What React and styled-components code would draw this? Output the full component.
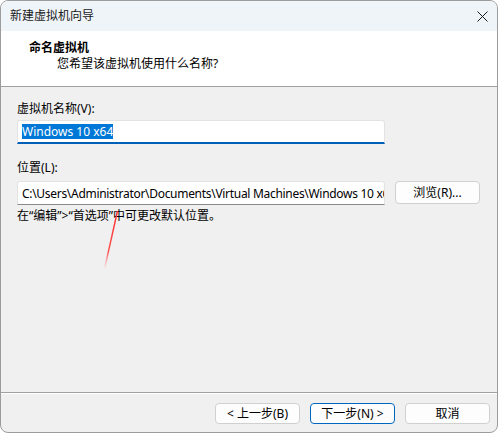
import React from "react";
import styled, { createGlobalStyle } from "styled-components";

const GlobalStyle = createGlobalStyle`
  html, body {
    margin: 0;
    padding: 0;
    background: #ffffff;
  }
  body {
    font-family: "Noto Sans", "Noto Sans CJK SC", sans-serif;
    font-size: 12px;
    color: #000;
  }
`;

const Window = styled.div`
  position: relative;
  box-sizing: border-box;
  width: 498px;
  height: 433px;
  border: 1px solid #9c9c9c;
  border-radius: 8px;
  background: #f0f0f0;
  overflow: hidden;
  display: flex;
  flex-direction: column;
`;

const TitleBar = styled.div`
  height: 30px;
  flex: none;
  background: #eff4f9;
  display: flex;
  align-items: center;
  justify-content: space-between;
  padding: 0 9px 0 9px;
`;

const TitleText = styled.span`
  font-size: 12px;
  line-height: 16px;
  color: #1a1a1a;
`;

const CloseButton = styled.div`
  width: 12px;
  height: 12px;
  display: flex;
  align-items: center;
  justify-content: center;
`;

const Header = styled.div`
  flex: none;
  height: 56px;
  background: #ffffff;
  border-bottom: 1px solid #a0a0a0;
  display: flex;
  flex-direction: column;
  padding: 9px 0 0 28px;
  box-sizing: border-box;
`;

const HeaderTitle = styled.div`
  font-weight: bold;
  line-height: 16px;
`;

const HeaderSub = styled.div`
  line-height: 16px;
  margin-left: 28px;
`;

const Body = styled.div`
  flex: 1;
  display: flex;
  flex-direction: column;
  padding: 14px 0 0 16px;
`;

const Label = styled.div`
  line-height: 16px;
  margin-top: ${(p) => p.$top || 0}px;
`;

const Row = styled.div`
  display: flex;
  align-items: flex-start;
  gap: 10px;
  margin-top: ${(p) => p.$top || 0}px;
`;

const Field = styled.div`
  box-sizing: border-box;
  width: 368px;
  height: 24px;
  background: #ffffff;
  border: 1px solid #e3e3e3;
  border-bottom: ${(p) => (p.$focused ? "2px solid #005fb8" : "1px solid #8a8a8a")};
  border-radius: 3px 3px 0 0;
  padding: 0 4px;
  display: flex;
  align-items: center;
  white-space: nowrap;
  overflow: hidden;
  letter-spacing: ${(p) => (p.$tight ? "-0.3px" : "normal")};
`;

const Selected = styled.span`
  background: #0078d7;
  color: #fff;
  line-height: 15px;
`;

const Button = styled.div`
  box-sizing: border-box;
  width: 85px;
  height: ${(p) => p.$h || 21}px;
  background: #fdfdfd;
  border: 1px solid ${(p) => (p.$primary ? "#0067c0" : "#d0d0d0")};
  border-radius: 4px;
  display: flex;
  align-items: center;
  justify-content: center;
  line-height: 16px;
`;

const Hint = styled.div`
  line-height: 16px;
  margin-top: 3px;
`;

const Footer = styled.div`
  flex: none;
  height: 40px;
  border-top: 1px solid #a0a0a0;
  box-shadow: inset 0 1px 0 #ffffff;
  display: flex;
  justify-content: flex-end;
  gap: 10px;
  padding: 10px 7px 0 0;
  box-sizing: border-box;
`;

const Annotation = styled.svg`
  position: absolute;
  left: 0;
  top: 0;
  pointer-events: none;
`;

export default function App() {
  return (
    <>
      <GlobalStyle />
      <Window>
        <TitleBar>
          <TitleText>新建虚拟机向导</TitleText>
          <CloseButton>
            <svg width="11" height="11" viewBox="0 0 11 11">
              <path d="M0.5 0.5 L10.5 10.5 M10.5 0.5 L0.5 10.5" stroke="#1a1a1a" strokeWidth="1" />
            </svg>
          </CloseButton>
        </TitleBar>
        <Header>
          <HeaderTitle>命名虚拟机</HeaderTitle>
          <HeaderSub>您希望该虚拟机使用什么名称?</HeaderSub>
        </Header>
        <Body>
          <Label>虚拟机名称(V):</Label>
          <Row $top={3}>
            <Field $focused>
              <Selected>Windows 10 x64</Selected>
            </Field>
          </Row>
          <Label $top={16}>位置(L):</Label>
          <Row $top={5}>
            <Field $tight>C:\Users\Administrator\Documents\Virtual Machines\Windows 10 x64</Field>
            <Button $h={23}>浏览(R)...</Button>
          </Row>
          <Hint>在“编辑”&gt;“首选项”中可更改默认位置。</Hint>
        </Body>
        <Footer>
          <Button>&lt; 上一步(B)</Button>
          <Button $primary>下一步(N) &gt;</Button>
          <Button>取消</Button>
        </Footer>
        <Annotation width="498" height="433">
          <defs>
            <linearGradient id="fade" x1="0" y1="0" x2="0" y2="1">
              <stop offset="0" stopColor="#ff2d2d" stopOpacity="1" />
              <stop offset="0.7" stopColor="#ff3b3b" stopOpacity="0.9" />
              <stop offset="1" stopColor="#ff6060" stopOpacity="0" />
            </linearGradient>
          </defs>
          <path d="M116.5 210 L103.5 268" stroke="url(#fade)" strokeWidth="1.4" fill="none" />
        </Annotation>
      </Window>
    </>
  );
}
